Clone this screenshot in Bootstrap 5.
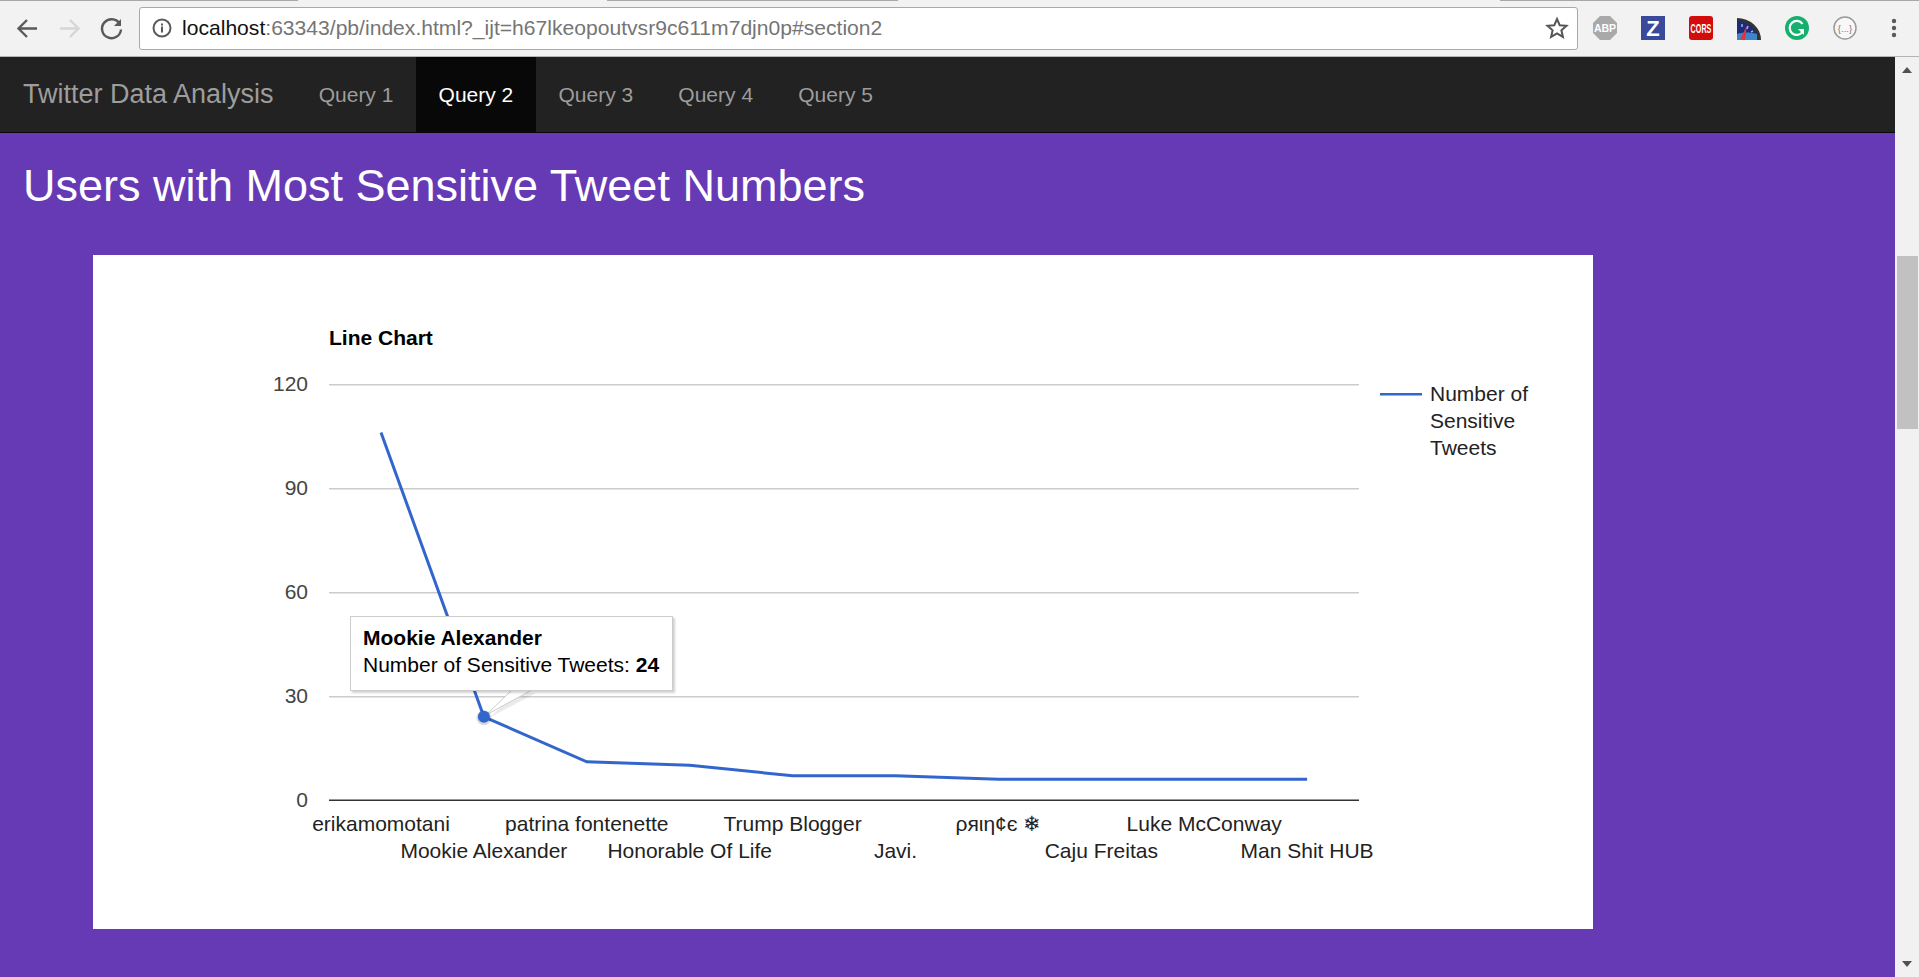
<!DOCTYPE html>
<html lang="en">
<head>
    <meta charset="UTF-8">
    <title>Twitter Data Analysis</title>
    <link rel="stylesheet" href="https://cdn.jsdelivr.net/npm/bootstrap@5.3.0/dist/css/bootstrap.min.css">
    <style>
        html, body { height: 100%; overflow: hidden; }
        body { font-family: "Liberation Sans", Arial, sans-serif; background: #f1f1f1; }

        .browser-bar { height: 57px; background: #f2f2f2; border-bottom: 1px solid #b4b4b4; padding-left: 14px; position: relative; }
        .tab-edge { position: absolute; top: 0; height: 1px; background: #a8a8a8; }
        .tab-edge-a { left: 0; width: 298px; }
        .tab-edge-b { left: 607px; width: 291px; }
        .tab-edge-c { left: 1500px; right: 0; }
        .nav-btn { width: 27px; height: 27px; margin-right: 15px; }
        .url-box { width: 1439px; height: 43px; margin-left: -1px; background: #fff; border: 1px solid #a9a9a9; border-radius: 3px; padding: 0 8px 0 11px; font-size: 21.1px; color: #757575; white-space: nowrap; }
        .url-icon { margin-right: 9px; }
        .url-host { color: #111; }
        .ext-icons { margin-left: 15px; gap: 24px; }
        .ext-icons svg { width: 24px; height: 24px; display: block; }

        .page-wrap { height: calc(100vh - 57px); }
        .page-main { width: 1895px; background: #6639b5; }
        .scroll-rail { width: 24px; background: #f1f1f1; position: relative; }
        .scroll-thumb { position: absolute; left: 2px; right: 1px; top: 199px; height: 173px; background: #c1c1c1; }
        .scroll-up, .scroll-down { position: absolute; left: 7px; width: 0; height: 0; border-left: 5.5px solid transparent; border-right: 5.5px solid transparent; }
        .scroll-up { top: 10px; border-bottom: 6px solid #505050; }
        .scroll-down { bottom: 10px; border-top: 6px solid #505050; }

        .twitter-nav { height: 76px; padding: 0; background: #222; border-bottom: 1px solid #080808; align-items: stretch; flex-wrap: nowrap; justify-content: flex-start; }
        .twitter-nav .navbar-brand { font-size: 27px; color: #9d9d9d; margin: 0; padding: 0 22.5px 0 23px; display: flex; align-items: center; }
        .twitter-nav .nav-link { font-size: 21px; color: #9d9d9d; padding: 0 22.6px; height: 75px; display: flex; align-items: center; }
        .twitter-nav .nav-link.active { color: #fff; background: #080808; }

        .page-title { font-size: 45px; font-weight: 400; line-height: 50px; color: #fff; margin: 0; padding: 28px 0 0 23px; }
        .chart-panel { width: 1500px; height: 674px; margin: 44px 0 0 93px; background: #fff; position: relative; }
        .chart-svg { display: block; width: 1500px; height: 674px; font-family: "Liberation Sans", Arial, sans-serif; font-size: 21px; }
        .chart-tip { position: absolute; left: 257px; top: 361px; width: 323px; height: 75px; padding: 7px 12px; background: #fff; border: 1px solid #ccc; box-shadow: 2px 2px 2px rgba(0,0,0,.18); font-size: 21px; line-height: 27px; color: #000; white-space: nowrap; }
    </style>
</head>
<body>
    <div class="browser-bar d-flex align-items-center">
        <div class="tab-edge tab-edge-a"></div>
        <div class="tab-edge tab-edge-b"></div>
        <div class="tab-edge tab-edge-c"></div>

        <svg class="nav-btn" viewBox="0 0 27 27" fill="none" stroke="#5a5a5a" stroke-width="2.4"><path d="M23 13.5H5M13 5l-8.500 8.500L13 22"/></svg>
        <svg class="nav-btn" viewBox="0 0 27 27" fill="none" stroke="#d6d6d6" stroke-width="2.4"><path d="M4 13.500h18M14 5l8.500 8.500L14 22"/></svg>
        <svg class="nav-btn" viewBox="0 0 27 27" fill="none" stroke="#5a5a5a" stroke-width="2.400"><path d="M21.500 8.500a9.500 9.500 0 1 0 1.500 6"/><path d="M23 4v7h-7" fill="#5a5a5a" stroke="none"/></svg>

        <div class="url-box d-flex align-items-center">
            <svg width="22" height="22" viewBox="0 0 22 22" class="url-icon flex-shrink-0"><circle cx="11" cy="11" r="8.500" fill="none" stroke="#5a5a5a" stroke-width="2"/><rect x="10" y="9.500" width="2" height="6" fill="#5a5a5a"/><rect x="10" y="6.500" width="2" height="2" fill="#5a5a5a"/></svg>
            <span><span class="url-host">localhost</span>:63343/pb/index.html?_ijt=h67lkeopoutvsr9c611m7djn0p#section2</span>
            <svg class="ms-auto flex-shrink-0" width="24" height="24" viewBox="0 0 24 24"><path d="M12 3l2.700 6.200 6.800.6-5.100 4.500 1.500 6.600L12 17.400l-5.900 3.500 1.500-6.600L2.500 9.800l6.800-.6z" fill="none" stroke="#555" stroke-width="2"/></svg>
        </div>

        <div class="ext-icons d-flex align-items-center">
            <svg viewBox="0 0 24 24"><path d="M7 0h10l7 7v10l-7 7H7l-7-7V7z" fill="#a9a9a9"/><text transform="translate(12 16) scale(1.05 1)" text-anchor="middle" font-size="10" font-weight="700" fill="#fff" font-family="Liberation Sans">ABP</text></svg>
            <svg viewBox="0 0 24 24"><rect width="24" height="24" fill="#3a4a9b"/><text x="12" y="20" text-anchor="middle" font-size="22" font-weight="700" fill="#fff" font-family="Liberation Sans">Z</text></svg>
            <svg viewBox="0 0 24 24"><rect width="24" height="24" rx="3" fill="#d40b0b"/><text transform="translate(12 16.500) scale(.6 1)" text-anchor="middle" font-size="12" font-weight="700" fill="#fff" font-family="Liberation Sans">CORS</text></svg>
            <svg viewBox="0 0 24 24"><path d="M0 24V2a24 22 0 0 1 24 22z" fill="#333"/><path d="M0 24V5a20 19 0 0 1 20 19z" fill="#1c2a7b"/><path d="M0 18c6-2 12-2 20 0v6H0z" fill="#3a86c8"/><path d="M3 24l7-15-2 15z" fill="#e8303a"/><path d="M5 8v3M11 10l-1 3M16 15l-2 1" stroke="#9db0e0" stroke-width="1.500"/></svg>
            <svg viewBox="0 0 24 24"><circle cx="12" cy="12" r="12" fill="#15b06e"/><path d="M17.500 8a7 7 0 1 0 .5 7" fill="none" stroke="#fff" stroke-width="2.200"/><path d="M13 13h6v6z" fill="#fff"/></svg>
            <svg viewBox="0 0 24 24"><circle cx="12" cy="12" r="11" fill="#f8f8f8" stroke="#9a9a9a" stroke-width="1.500"/><text x="12" y="15.500" text-anchor="middle" font-size="9.500" fill="#777" font-family="Liberation Sans">{...}</text></svg>
            <svg style="width:6px;margin-left:10px" viewBox="0 0 6 24"><circle cx="3" cy="5" r="2.200" fill="#5a5a5a"/><circle cx="3" cy="12" r="2.200" fill="#5a5a5a"/><circle cx="3" cy="19" r="2.200" fill="#5a5a5a"/></svg>
        </div>
    </div>

    <div class="page-wrap d-flex">
        <div class="page-main">
            <nav class="navbar twitter-nav">
                <a class="navbar-brand" href="#">Twitter Data Analysis</a>
                <ul class="navbar-nav flex-row">
                    <li class="nav-item"><a class="nav-link" href="#section1">Query 1</a></li>
                    <li class="nav-item"><a class="nav-link active" href="#section2">Query 2</a></li>
                    <li class="nav-item"><a class="nav-link" href="#section3">Query 3</a></li>
                    <li class="nav-item"><a class="nav-link" href="#section4">Query 4</a></li>
                    <li class="nav-item"><a class="nav-link" href="#section5">Query 5</a></li>
                </ul>
            </nav>

            <h1 class="page-title">Users with Most Sensitive Tweet Numbers</h1>

            <div class="chart-panel">
                <svg class="chart-svg" id="chart" viewBox="0 0 1500 674"></svg>
                <div class="chart-tip">
                    <b>Mookie Alexander</b><br>
                    Number of Sensitive Tweets: <b>24</b>
                </div>
            </div>
        </div>
        <div class="scroll-rail">
            <div class="scroll-up"></div>
            <div class="scroll-thumb"></div>
            <div class="scroll-down"></div>
        </div>
    </div>

    <script src="https://cdn.jsdelivr.net/npm/bootstrap@5.3.0/dist/js/bootstrap.bundle.min.js"></script>
    <script>
        document.addEventListener('DOMContentLoaded', () => {
            const chart = document.getElementById('chart');
            // panel sits at x 93, y 255 on the page
            const users = [
                ['erikamomotani', 106], ['Mookie Alexander', 24], ['patrina fontenette', 11],
                ['Honorable Of Life', 10], ['Trump Blogger', 7], ['Javi.', 7],
                ['ρяιη¢є ❄', 6], ['Caju Freitas', 6], ['Luke McConway', 6], ['Man Shit HUB', 6]
            ];
            const xAt = i => 288 + i * 102.9;
            const yAt = v => 545 - v * 3.467;

            let html = '<text x="236" y="90" font-weight="700" fill="#000">Line Chart</text>';
            [120, 90, 60, 30].forEach(v => {
                html += `<rect x="236" y="${Math.round(yAt(v))}" width="1030" height="1.500" fill="#ccc"/>`;
            });
            [120, 90, 60, 30, 0].forEach(v => {
                html += `<text x="215" y="${yAt(v) + 7}" text-anchor="end" fill="#444">${v}</text>`;
            });
            html += '<rect x="236" y="544.500" width="1030" height="1.500" fill="#333"/>';

            const points = users.map((u, i) => `${xAt(i)},${yAt(u[1])}`).join(' ');
            html += `<polyline points="${points}" fill="none" stroke="#3366cc" stroke-width="3"/>`;

            users.forEach((u, i) => {
                const y = i % 2 ? 603 : 576;
                html += `<text x="${xAt(i)}" y="${y}" text-anchor="middle" fill="#222">${u[0]}</text>`;
            });

            // tooltip tail and the hovered point
            html += '<path d="M421 436 L394 461 L441 436z" fill="#000" opacity=".08" transform="translate(2 2)"/>';
            html += '<path d="M419 435 L393 460 L439 435z" fill="#fff" stroke="#ccc"/>';
            html += `<circle cx="${xAt(1)}" cy="${yAt(24) + 1}" r="7.500" fill="#000" opacity=".15"/>`;
            html += `<circle cx="${xAt(1)}" cy="${yAt(24)}" r="6" fill="#3366cc"/>`;

            // legend
            html += '<rect x="1287" y="138" width="42" height="2.500" fill="#3366cc"/>';
            ['Number of', 'Sensitive', 'Tweets'].forEach((t, i) => {
                html += `<text x="1337" y="${146 + i * 27}" fill="#222">${t}</text>`;
            });
            chart.innerHTML = html;
        });
    </script>
</body>
</html>
